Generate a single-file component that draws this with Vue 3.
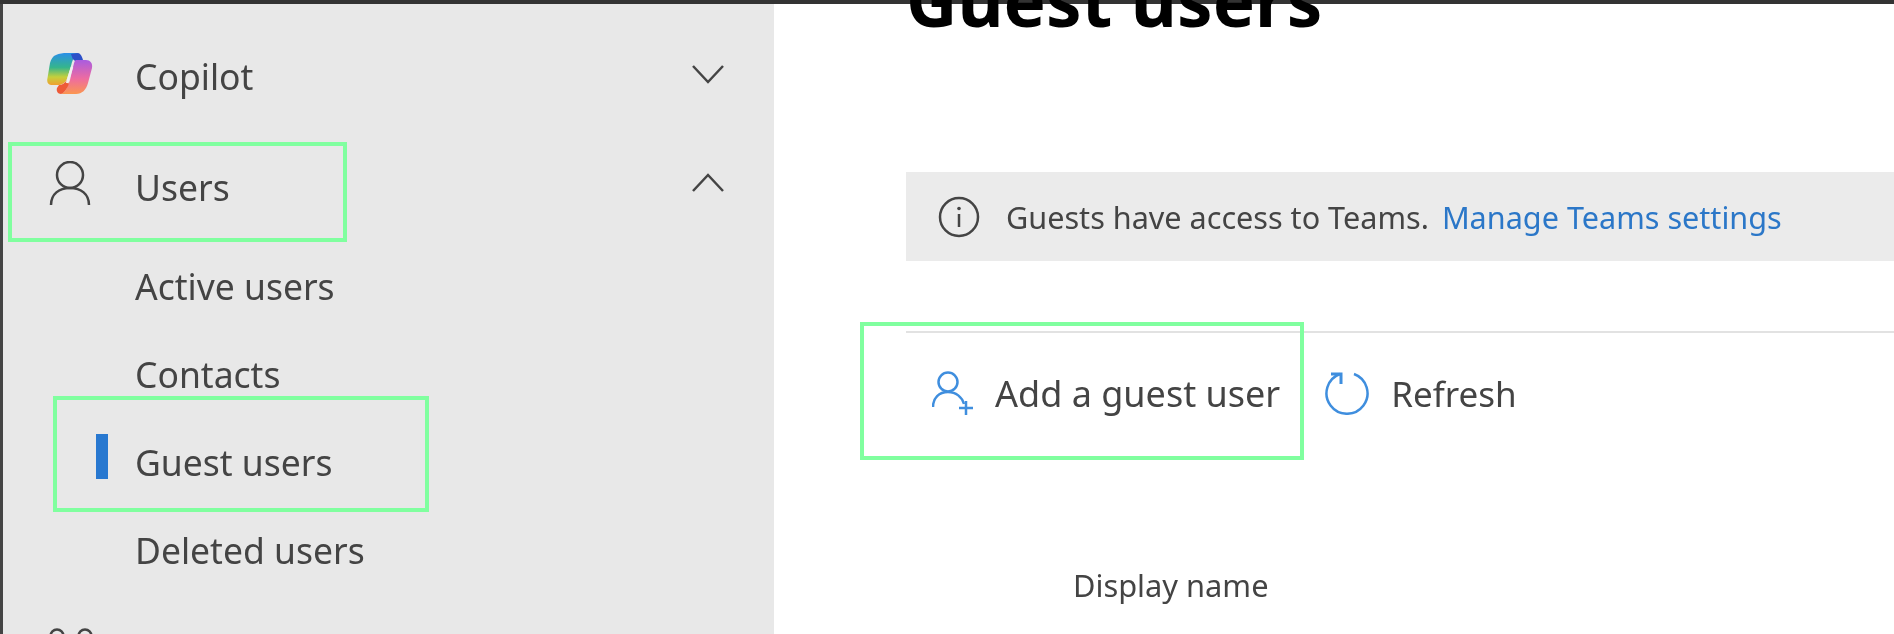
<template>
  <div class="page">
    <div class="top-bar"></div>
    <div class="shell">
      <aside class="sidebar">
        <nav class="nav">
          <div class="nav-row copilot">
            <span class="nav-icon">
              <svg width="46" height="42" viewBox="0 0 46 42">
                <defs>
                  <linearGradient id="copilotLeft" x1="0" y1="0" x2="0" y2="1">
                    <stop offset="0" stop-color="#2a8fe8" />
                    <stop offset="0.45" stop-color="#35b58c" />
                    <stop offset="0.75" stop-color="#c5d03c" />
                    <stop offset="1" stop-color="#f0a030" />
                  </linearGradient>
                  <linearGradient id="copilotRight" x1="0" y1="0" x2="0" y2="1">
                    <stop offset="0" stop-color="#a95ce0" />
                    <stop offset="0.55" stop-color="#ee6ca0" />
                    <stop offset="1" stop-color="#fb9650" />
                  </linearGradient>
                </defs>
                <path d="M9 2 C12 0.500 16 0 20 0 L31 0 C27 3 25 8 24 13 L20 26 C18 30 15 32 10 32 L4 32 C1 32 -0.500 29 0.500 25 L3 10 C4 6 6 3 9 2 Z" fill="url(#copilotLeft)" />
                <path d="M24 1 L31 0 C33 0 35 3 36 7 L29 8 C26 8 25 4 24 1 Z" fill="#2c50c8" />
                <path d="M29 7 L39 7 C43 7 46 10 45 15 L41 30 C39 37 35 41 29 41 L14 41 C19 39 21 33 23 27 L26 14 C27 11 27 8 29 7 Z" fill="url(#copilotRight)" />
                <path d="M12 32 C15 32 18 30 20 27 L22 31 C20 36 17 40 14 41 C11 41 9 38 10 35 Z" fill="#ee5a38" />
                <path d="M25 14 L20 30" fill="none" stroke="#f2f0f0" stroke-width="2.500" />
              </svg>
            </span>
            <span class="nav-label">Copilot</span>
            <svg class="chevron" width="34" height="20" viewBox="0 0 34 20">
              <path d="M2 2 L17 18 L32 2" />
            </svg>
          </div>
          <div class="nav-row users">
            <span class="nav-icon">
              <svg width="42" height="45" viewBox="0 0 42 45">
                <circle cx="21" cy="14" r="13" />
                <path d="M2 44 C2 33 10 27 21 27 C32 27 40 33 40 44" />
              </svg>
            </span>
            <span class="nav-label">Users</span>
            <svg class="chevron" width="34" height="20" viewBox="0 0 34 20">
              <path d="M2 18 L17 2 L32 18" />
            </svg>
          </div>
          <div v-for="item in subItems" :key="item" class="nav-row sub">
            <span v-if="item === 'Guest users'" class="active-bar"></span>
            <span class="nav-label">{{ item }}</span>
          </div>
          <div class="nav-row teams">
            <span class="nav-icon">
              <svg width="44" height="30" viewBox="0 0 44 30">
                <circle cx="8" cy="8" r="6.500" />
                <circle cx="36" cy="8" r="6.500" />
              </svg>
            </span>
          </div>
        </nav>
      </aside>

      <main class="content">
        <h1 class="title">Guest users</h1>

        <div class="banner">
          <svg width="42" height="42" viewBox="0 0 42 42">
            <circle cx="21" cy="21" r="19" />
            <path d="M21 18 V31" />
            <circle class="dot" cx="21" cy="12.500" r="1.800" />
          </svg>
          <span class="banner-text">Guests have access to Teams.</span>
          <a class="banner-link" href="#">Manage Teams settings</a>
        </div>

        <div class="toolbar">
          <button class="tool add">
            <svg width="42" height="44" viewBox="0 0 42 44">
              <circle cx="16" cy="11" r="9.500" />
              <path d="M1 36 C1 27 7 21 16 21 C24 21 30 26 32 33" />
              <path d="M34 30 V44 M27 37 H41" />
            </svg>
            <span>Add a guest user</span>
          </button>
          <button class="tool refresh">
            <svg width="46" height="44" viewBox="0 0 46 44">
              <path d="M30 3 A20.500 20.500 0 1 1 16 3" />
              <path class="head" d="M7 3 H17 V13" />
            </svg>
            <span>Refresh</span>
          </button>
        </div>

        <div class="table-head">Display name</div>
      </main>
    </div>

    <div class="mark mark-users"></div>
    <div class="mark mark-guest"></div>
    <div class="mark mark-add"></div>
  </div>
</template>

<script setup>
const subItems = ['Active users', 'Contacts', 'Guest users', 'Deleted users']
</script>

<style>
html,
body {
  margin: 0;
  background: #fff;
}
</style>

<style scoped>
.page {
  position: relative;
  width: 1894px;
  height: 634px;
  overflow: hidden;
  font-family: "Noto Sans", "Open Sans", sans-serif;
  color: #444;
}

.top-bar {
  height: 4px;
  background: #333;
}

.shell {
  display: flex;
  height: 630px;
}

/* 左侧导航 */
.sidebar {
  width: 771px;
  flex: none;
  background: #e8e8e8;
  border-left: 3px solid #444;
}

.nav {
  padding-top: 17px;
}

.nav-row {
  position: relative;
  display: flex;
  align-items: center;
  height: 88px;
  padding-left: 132px;
  padding-right: 49px;
  font-size: 35.5px;
  filter: blur(0.6px);
}

.copilot {
  height: 110px;
}

.users {
  height: 111px;
}

.teams {
  height: 40px;
}

.nav-icon {
  position: absolute;
  left: 44px;
  display: flex;
}

.copilot .nav-icon {
  top: 32px;
}

.users .nav-icon {
  left: 46px;
  top: 30px;
}

.teams .nav-icon {
  left: 46px;
  top: 34px;
}

.nav-icon svg circle,
.nav-icon svg > path[d^="M2 44"] {
  fill: none;
  stroke: #444;
  stroke-width: 2.5;
}

.chevron {
  margin-left: auto;
  fill: none;
  stroke: #444;
  stroke-width: 2.5;
}

.copilot .chevron {
  margin-top: -4px;
}

.users .chevron {
  margin-top: -8px;
}

.active-bar {
  position: absolute;
  left: 93px;
  top: 16px;
  width: 12px;
  height: 45px;
  background: #2878d0;
}

/* 主内容 */
.content {
  flex: 1;
  min-width: 0;
  padding-left: 132px;
  background: #fff;
}

.title {
  margin: -49px 0 0;
  height: 89px;
  font-size: 71px;
  line-height: 89px;
  font-weight: 700;
  color: #000;
  filter: blur(0.6px);
}

.banner {
  display: flex;
  align-items: center;
  height: 89px;
  margin-top: 128px;
  padding-left: 32px;
  background: #ebebeb;
  font-size: 30.6px;
}

.banner svg {
  flex: none;
  margin-right: 26px;
  fill: none;
  stroke: #444;
  stroke-width: 2.5;
  filter: blur(0.4px);
}

.banner svg .dot {
  fill: #444;
  stroke: none;
}

.banner-text,
.banner-link {
  filter: blur(0.6px);
}

.banner-link {
  margin-left: 13px;
  color: #2b77c8;
  text-decoration: none;
}

.toolbar {
  display: flex;
  align-items: center;
  gap: 44px;
  height: 120px;
  margin-top: 70px;
  border-top: 2px solid #e2e2e2;
  padding-left: 26px;
}

.tool {
  display: flex;
  align-items: center;
  gap: 21px;
  padding: 0;
  border: 0;
  background: none;
  font: inherit;
  font-size: 36px;
  color: #444;
}

.tool.refresh {
  gap: 21px;
  font-size: 35px;
}

.tool span {
  filter: blur(0.6px);
}

.tool svg {
  flex: none;
  fill: none;
  stroke: #3f8ede;
  stroke-width: 2.5;
  filter: blur(0.3px);
}

.tool svg .head {
  stroke-width: 3;
}

.table-head {
  margin-top: 111px;
  padding-left: 167px;
  font-size: 30.8px;
  filter: blur(0.6px);
}

/* 绿色标注框 */
.mark {
  position: absolute;
  box-sizing: border-box;
  border: 4px solid #80ff9f;
}

.mark-users {
  left: 8px;
  top: 142px;
  width: 339px;
  height: 100px;
}

.mark-guest {
  left: 53px;
  top: 396px;
  width: 376px;
  height: 116px;
}

.mark-add {
  left: 860px;
  top: 322px;
  width: 444px;
  height: 138px;
}
</style>
